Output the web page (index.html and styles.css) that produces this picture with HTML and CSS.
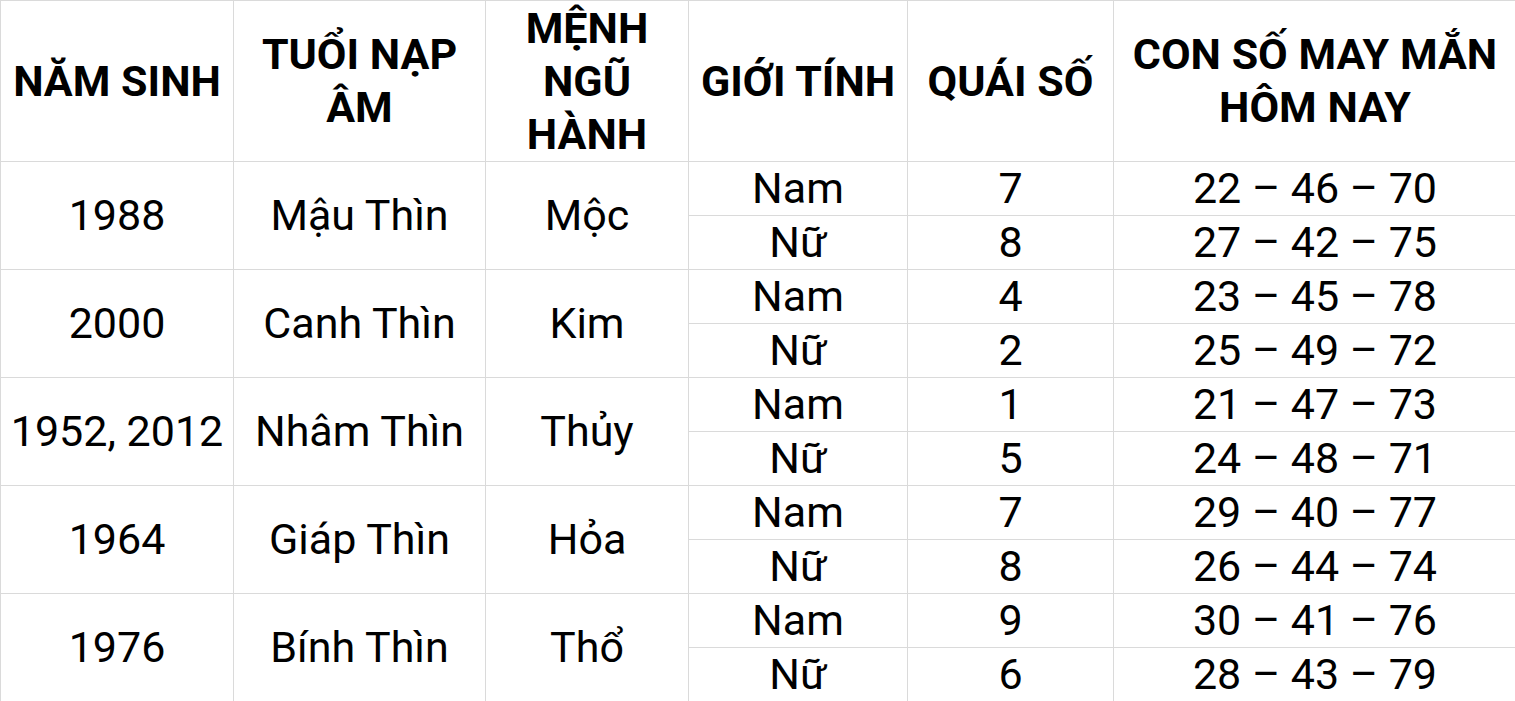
FILE: index.html
```html
<!DOCTYPE html>
<html lang="vi">
<head>
<meta charset="utf-8">
<title>Con số may mắn</title>
<link rel="stylesheet" href="styles.css">
</head>
<body>
<table class="grid">
  <colgroup>
    <col class="c1"><col class="c2"><col class="c3"><col class="c4"><col class="c5"><col class="c6">
  </colgroup>
  <thead>
    <tr class="head">
      <th>NĂM SINH</th>
      <th>TUỔI NẠP<br>ÂM</th>
      <th>MỆNH<br>NGŨ<br>HÀNH</th>
      <th>GIỚI TÍNH</th>
      <th>QUÁI SỐ</th>
      <th>CON SỐ MAY MẮN<br>HÔM NAY</th>
    </tr>
  </thead>
  <tbody>
    <tr><td rowspan="2">1988</td><td rowspan="2">Mậu Thìn</td><td rowspan="2">Mộc</td><td>Nam</td><td>7</td><td>22 – 46 – 70</td></tr>
    <tr><td>Nữ</td><td>8</td><td>27 – 42 – 75</td></tr>
    <tr><td rowspan="2">2000</td><td rowspan="2">Canh Thìn</td><td rowspan="2">Kim</td><td>Nam</td><td>4</td><td>23 – 45 – 78</td></tr>
    <tr><td>Nữ</td><td>2</td><td>25 – 49 – 72</td></tr>
    <tr><td rowspan="2">1952, 2012</td><td rowspan="2">Nhâm Thìn</td><td rowspan="2">Thủy</td><td>Nam</td><td>1</td><td>21 – 47 – 73</td></tr>
    <tr><td>Nữ</td><td>5</td><td>24 – 48 – 71</td></tr>
    <tr><td rowspan="2">1964</td><td rowspan="2">Giáp Thìn</td><td rowspan="2">Hỏa</td><td>Nam</td><td>7</td><td>29 – 40 – 77</td></tr>
    <tr><td>Nữ</td><td>8</td><td>26 – 44 – 74</td></tr>
    <tr><td rowspan="2">1976</td><td rowspan="2">Bính Thìn</td><td rowspan="2">Thổ</td><td>Nam</td><td>9</td><td>30 – 41 – 76</td></tr>
    <tr><td>Nữ</td><td>6</td><td>28 – 43 – 79</td></tr>
  </tbody>
</table>
</body>
</html>
```
FILE: styles.css
```css
html, body {
  margin: 0;
  padding: 0;
  background: #ffffff;
  overflow: hidden;
}
.grid {
  border-collapse: collapse;
  table-layout: fixed;
  width: 1516px;
  font-family: Roboto, "Liberation Sans", sans-serif;
  color: #000;
}
.c1 { width: 233px; }
.c2 { width: 252px; }
.c3 { width: 203px; }
.c4 { width: 219px; }
.c5 { width: 206px; }
.c6 { width: 403px; }
.grid th, .grid td {
  border: 1px solid #dadada;
  padding: 0;
  text-align: center;
  vertical-align: middle;
  white-space: nowrap;
}
.grid th {
  height: 160px;
  font-weight: 700;
  font-size: 43px;
  line-height: 53px;
}
.grid td {
  height: 53px;
  font-size: 43px;
  line-height: 53px;
  font-weight: 400;
}
```
